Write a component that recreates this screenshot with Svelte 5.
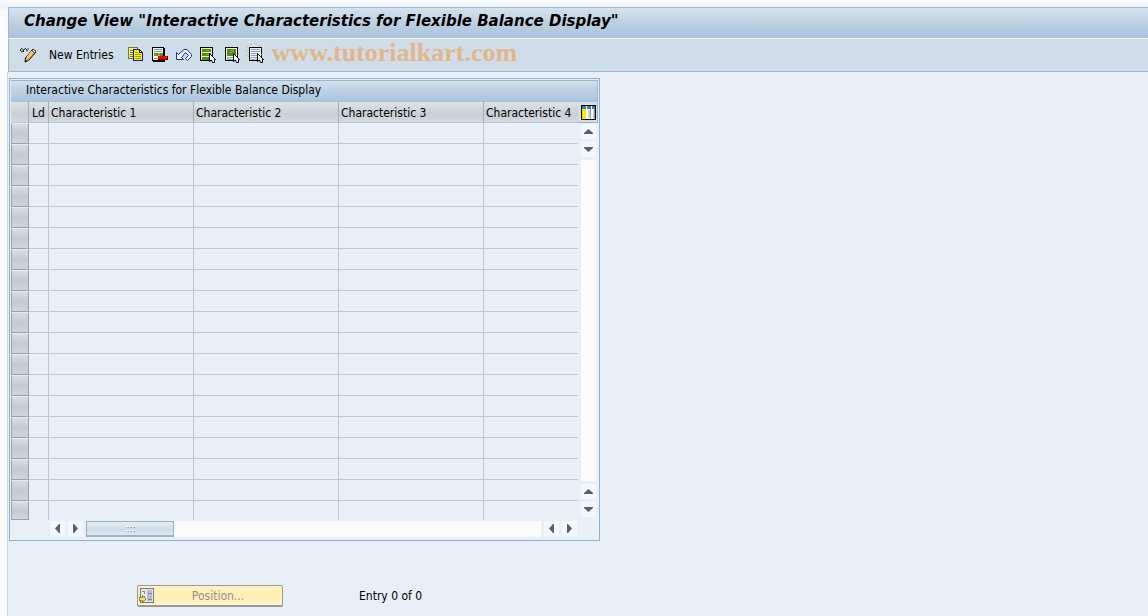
<script>
  const columns = ['Characteristic 1', 'Characteristic 2', 'Characteristic 3', 'Characteristic 4'];
  const rows = Array.from({ length: 19 }, (_, i) => i + 1);

  let total = 0;
  let position = 0;
</script>

{#snippet arrow(dir)}
  <svg class="arrow {dir}" width="9" height="5" viewBox="0 0 9 5" aria-hidden="true">
    <path d="M4.5 0L9 4V5H0V4Z" fill="#4f6473" />
  </svg>
{/snippet}

{#snippet cursor()}
  <path d="M9.500 6.500V14.500L11.500 13L12.500 15.500H14.500V12.500H15.500Z" fill="#fff" stroke="#000" />
{/snippet}

<div class="window">
  <header class="title-bar">
    <h1>Change View "Interactive Characteristics for Flexible Balance Display"</h1>
  </header>

  <div class="toolbar">
    <button class="tool" aria-label="Display / Change">
      <svg width="17" height="16" viewBox="0 0 17 16">
        <path d="M0.500 4V2.500L2 1.500L3.500 3V5M4 2.500L5.500 1.500L7 3V4.500M7.500 2H9M1 5L3 4" fill="none" stroke="#111" />
        <path d="M12.5 2.500L16 5L8.500 13.500L5 15L5.500 11Z" fill="#f4a640" stroke="#111" />
        <path d="M12 4L7 10M13 5L8 11" stroke="#ffe9a8" />
        <path d="M13 2L16 4L15 6L12 4Z" fill="#c9d4ee" stroke="#222" stroke-width=".7" />
        <path d="M5 15V13L7 14Z" fill="#111" />
      </svg>
    </button>
    <button class="tool text">New Entries</button>
    <button class="tool" aria-label="Copy As">
      <svg width="16" height="16" viewBox="0 0 16 16" shape-rendering="crispEdges">
        <rect x="0.500" y="0.500" width="9" height="11" fill="#f5ed7a" stroke="#7b7a2c" />
        <path d="M2 3.500H5M2 5.500H5M2 7.500H5M2 9.500H5" stroke="#77763a" />
        <path d="M5 2H12L15 5V14H5Z" fill="#ffee11" />
        <path d="M5 2.500H12M5.500 2V14M5 13.500H15M14.500 5V14M11.500 2V6M11 5.500H15M12 3.500H13M13 4.500H14" fill="none" stroke="#1414a8" />
        <path d="M12 4H13V5H12Z" fill="#fff" />
        <path d="M7 5.500H10M7 7.500H13M7 9.500H13M7 11.500H13" stroke="#a39a20" />
      </svg>
    </button>
    <button class="tool" aria-label="Delete">
      <svg width="16" height="16" viewBox="0 0 16 16" shape-rendering="crispEdges">
        <rect x="1" y="1" width="12" height="14" fill="#000" />
        <rect x="0" y="0" width="12" height="14" fill="#000" />
        <rect x="1" y="1" width="10" height="12" fill="#f7f9fa" />
        <path d="M2 2.500H10M2 4.500H10M2 11.500H8" stroke="#8297ab" />
        <rect x="2" y="6" width="9" height="3" fill="#5d9708" />
        <path d="M3 7.500H4M6 6.500H8M6 8.500H8" stroke="#a9cc77" />
        <rect x="6" y="9" width="10" height="4" fill="#500" />
        <rect x="6" y="9" width="9" height="3" fill="#f00" />
      </svg>
    </button>
    <button class="tool" aria-label="Undo Change">
      <svg width="16" height="16" viewBox="0 0 16 16">
        <path
          d="M.5 5.500V12.500H7.500L5.500 10.500L9.500 5.500L12.500 8.500L9.500 11.500L11.500 13.500L15.500 9.500V7.500L11 2.500H8L2.500 7.500Z"
          fill="#f3f6fc"
          stroke="#26269c"
        />
      </svg>
    </button>
    <button class="tool" aria-label="Select All">
      <svg width="16" height="16" viewBox="0 0 16 16">
        <g shape-rendering="crispEdges">
          <rect x="0.500" y="0.500" width="12" height="13" fill="#e8f0da" stroke="#000" />
          <path d="M2 2H11V5H2ZM2 6H11V9H2ZM2 10H10V13H2Z" fill="#558e05" />
          <path d="M6 3.500H9M6 7.500H9" stroke="#83ae48" />
        </g>
        {@render cursor()}
      </svg>
    </button>
    <button class="tool" aria-label="Select Block">
      <svg width="16" height="16" viewBox="0 0 16 16">
        <g shape-rendering="crispEdges">
          <rect x="1.500" y="0.500" width="12" height="13" fill="#f1f4f7" stroke="#000" />
          <path d="M3 2H12V9H3Z" fill="#558e05" />
          <path d="M7 3.500H10M6 5.500H9" stroke="#83ae48" />
          <path d="M3.500 10.500H9V12.500H3.500Z" fill="#dfe6ed" stroke="#8ca2b8" />
        </g>
        {@render cursor()}
      </svg>
    </button>
    <button class="tool deselect" aria-label="Deselect All">
      <svg width="16" height="16" viewBox="0 0 16 16">
        <g shape-rendering="crispEdges">
          <rect x="1.500" y="0.500" width="12" height="13" fill="#f1f4f7" stroke="#000" />
          <path d="M3 2.500H12M3 4.500H12M3 6.500H10M3 8.500H9M3 10.500H9M3 12.500H9" stroke="#8ca2b8" />
        </g>
        {@render cursor()}
      </svg>
      <span class="ring"></span>
    </button>
    <span class="watermark">www.tutorialkart.com</span>
  </div>

  <main>
    <section class="panel">
      <h2>Interactive Characteristics for Flexible Balance Display</h2>
      <div class="panel-body">
        <div class="grid-area">
          <table>
            <thead>
              <tr>
                <th class="selector"></th>
                <th class="ld">Ld</th>
                {#each columns as column, i}
                  <th class:last={i === columns.length - 1}>{column}</th>
                {/each}
              </tr>
            </thead>
            <tbody>
              {#each rows as row (row)}
                <tr>
                  <td class="selector"></td>
                  <td class="ld"></td>
                  {#each columns as column, i}
                    <td class:last={i === columns.length - 1}></td>
                  {/each}
                </tr>
              {/each}
            </tbody>
          </table>
          <div class="h-scroll">
            <button class="step" aria-label="Scroll left">{@render arrow('left')}</button>
            <button class="step" aria-label="Scroll right">{@render arrow('right')}</button>
            <div class="track">
              <div class="thumb">
                <svg width="9" height="6" viewBox="0 0 9 6" shape-rendering="crispEdges">
                  <path d="M1 1.500H3M4 1.500H6M7 1.500H9M1 5.500H3M4 5.500H6M7 5.500H9" stroke="#9fb0be" />
                  <path d="M0 .5H2M3 .5H5M6 .5H8M0 4.500H2M3 4.500H5M6 4.500H8" stroke="#fff" />
                </svg>
              </div>
            </div>
            <button class="step" aria-label="Page left">{@render arrow('left')}</button>
            <button class="step" aria-label="Page right">{@render arrow('right')}</button>
          </div>
        </div>

        <div class="side">
          <button class="configure" aria-label="Configuration">
            <svg width="15" height="15" viewBox="0 0 15 15" shape-rendering="crispEdges">
              <rect x="0.500" y="0.500" width="14" height="14" fill="#fff" stroke="#000" />
              <path d="M1 1H14V4H1Z" fill="#2f7fc4" />
              <path d="M1 4H5V14H1Z" fill="#ffe800" />
              <path d="M7 5H9V13H7ZM12 5H13V13H12Z" fill="#c9d1d9" />
              <path d="M5.500 1V14M10.500 1V14" stroke="#fff" />
              <path d="M9.500 4V14M13.500 4V14" stroke="#8c99a6" />
            </svg>
          </button>
          <div class="v-scroll">
            <button class="step" aria-label="Scroll up">{@render arrow('up')}</button>
            <button class="step" aria-label="Scroll down">{@render arrow('down')}</button>
            <div class="track"></div>
            <button class="step" aria-label="Page up">{@render arrow('up')}</button>
            <button class="step" aria-label="Page down">{@render arrow('down')}</button>
          </div>
        </div>
      </div>
    </section>

    <footer>
      <button class="position" disabled>
        <svg width="16" height="16" viewBox="0 0 16 16" shape-rendering="crispEdges">
          <rect x="1.500" y="0.500" width="13" height="14" fill="#e7e8ee" stroke="#77777f" />
          <path d="M8 2H13V13H8Z" fill="#b9bccb" />
          <path d="M3 3.500H6M5.500 4V6M3 8.500H6M9 5.500H13M9 11.500H13" stroke="#85858f" />
          <path d="M0 9H3V7L7 11L3 15V13H0Z" fill="#8d8643" />
          <path d="M1 10H4V9L6 11L4 13V12H1Z" fill="#f6e35b" />
        </svg>
        <span>Position...</span>
      </button>
      <span>Entry {position} of {total}</span>
    </footer>
  </main>
</div>

<style>
  :global(body) {
    margin: 0;
    background: #e8eff6;
  }

  .window {
    box-sizing: border-box;
    min-height: 100vh;
    padding: 7px 0 0 7px;
    background: linear-gradient(#f8fafd, #eef3f9 7px, #f8fafd 12px);
    font: 12px/16px Tahoma, 'DejaVu Sans Condensed', 'DejaVu Sans', sans-serif;
    color: #000;
    display: flex;
    flex-direction: column;
  }

  button {
    font: inherit;
    color: inherit;
    margin: 0;
    padding: 0;
    border: 0;
    background: none;
  }

  svg {
    display: block;
  }

  .title-bar {
    margin-left: 1px;
    border-top: 1px solid #a3b5cb;
    border-left: 1px solid #a3b5cb;
    border-bottom: 1px solid #f4f8fb;
    background: linear-gradient(#d5e2ee, #bdd0e1 50%, #a9c2db);
    padding: 3px 15px 6px;
  }

  h1 {
    margin: 0;
    font-family: 'DejaVu Sans', sans-serif;
    font-size: 15px;
    line-height: 21px;
    font-weight: bold;
    font-style: italic;
    white-space: nowrap;
  }

  .toolbar {
    display: flex;
    align-items: center;
    gap: 8px;
    height: 32px;
    margin-left: 1px;
    padding-left: 11px;
    background: #cfdde8;
    border-left: 1px solid #a3b5cb;
    border-bottom: 1px solid #a3b5cb;
  }

  .tool.text {
    margin: 0 6px 0 4px;
    white-space: nowrap;
  }

  .deselect {
    position: relative;
  }

  .ring {
    position: absolute;
    left: -2px;
    top: -4px;
    width: 15px;
    height: 15px;
    border: 1px dashed #e3b68a;
    border-radius: 50%;
  }

  .watermark {
    font-family: 'Liberation Serif', serif;
    font-size: 26px;
    line-height: 28px;
    padding-bottom: 4px;
    font-weight: bold;
    color: #e3b68a;
  }

  main {
    flex: 1;
    padding: 6px 1px 9px;
    background: #e8eff6;
    border-left: 1px solid #c9d7e6;
  }

  .panel {
    width: fit-content;
    padding: 1px;
    border: 1px solid #8db0d0;
  }

  h2 {
    margin: 0;
    padding: 1px 15px 4px;
    border: 1px solid #9db4cc;
    border-width: 1px 1px 0 0;
    background: linear-gradient(#d0dfeb, #a9c2dc);
    font-size: 12px;
    line-height: 16px;
    font-weight: normal;
  }

  .panel-body {
    display: flex;
  }

  table {
    border-spacing: 0;
    table-layout: fixed;
  }

  th,
  td {
    box-sizing: border-box;
    width: 145px;
    height: 21px;
    padding: 0 2px;
    border-right: 1px solid #bcc7d6;
    border-bottom: 1px solid #bcc7d6;
    text-align: left;
    font-weight: normal;
    white-space: nowrap;
  }

  th {
    padding-top: 2px;
    background: linear-gradient(#dfe3e6, #c9cfd5 60%, #d4d9de);
    border-right-color: #a5adb8;
  }

  .ld {
    width: 20px;
  }

  th.ld {
    padding-left: 3px;
  }

  .last {
    width: 94px;
    border-right: 0;
  }

  tbody tr:last-child td {
    height: 19px;
    border-bottom: 0;
  }

  .selector {
    width: 18px;
    padding: 0;
  }

  td.selector {
    border: 1px solid #98a1ad;
    border-top-color: #e9ecef;
    background: linear-gradient(#d9dde2, #c5cad2 50%, #d0d4da);
  }

  tbody tr:last-child td.selector {
    border-bottom: 1px solid #98a1ad;
  }

  .step {
    width: 15px;
    height: 15px;
    display: flex;
    align-items: center;
    justify-content: center;
    background: #f4f7fb;
  }

  .down {
    transform: rotate(180deg);
  }

  .left {
    transform: rotate(-90deg);
  }

  .right {
    transform: rotate(90deg);
  }

  .h-scroll {
    display: flex;
    gap: 3px;
    padding: 1px 1px 2px 39px;
  }

  .track {
    flex: 1;
    background: #fbfbfc;
  }

  .thumb {
    box-sizing: border-box;
    width: 88px;
    height: 16px;
    display: flex;
    align-items: center;
    justify-content: center;
    border: 1px solid #98adbf;
    border-bottom: 2px solid #a3b2bf;
    background: linear-gradient(#e6eef5, #cddce8 60%, #dde8f0);
  }

  .side {
    display: flex;
    flex-direction: column;
    width: 20px;
  }

  .configure {
    box-sizing: border-box;
    height: 21px;
    padding: 3px 1px 2px 3px;
    border-right: 1px solid #a5adb8;
    border-bottom: 1px solid #a5adb8;
    background: #d9dee3;
  }

  .v-scroll {
    flex: 1;
    display: flex;
    flex-direction: column;
    gap: 3px;
    padding: 1px 2px 22px 3px;
  }

  footer {
    display: flex;
    align-items: center;
    gap: 76px;
    margin-top: 44px;
    padding-left: 128px;
  }

  .position {
    display: flex;
    align-items: center;
    width: 146px;
    height: 22px;
    padding: 0 1px;
    box-sizing: border-box;
    border: 1px solid #999a98;
    border-bottom-width: 2px;
    border-radius: 2px;
    background: linear-gradient(#fff3c4, #ffeeb0 45%, #fff3c9);
    color: #8e9091;
  }

  .position span {
    flex: 1;
    text-align: center;
  }
</style>
